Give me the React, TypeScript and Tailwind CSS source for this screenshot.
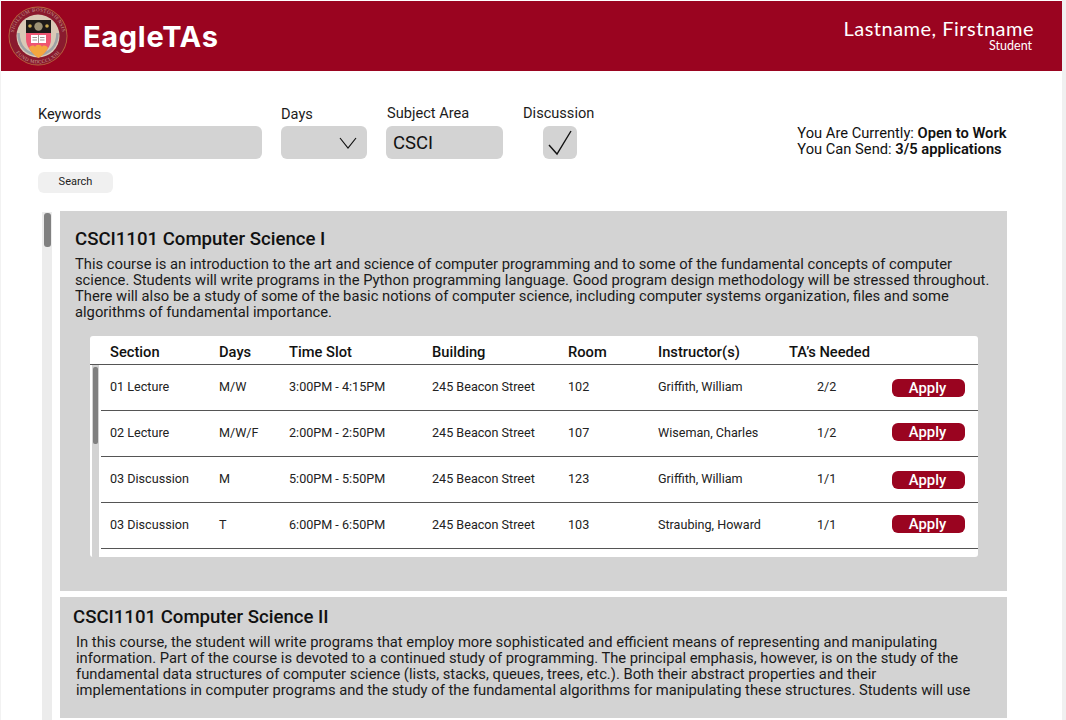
const rows = [
  { section: "01 Lecture", days: "M/W", time: "3:00PM - 4:15PM", room: "102", instructor: "Griffith, William", needed: "2/2", applyShift: "mt-[1px]" },
  { section: "02 Lecture", days: "M/W/F", time: "2:00PM - 2:50PM", room: "107", instructor: "Wiseman, Charles", needed: "1/2", applyShift: "mb-[4px]" },
  { section: "03 Discussion", days: "M", time: "5:00PM - 5:50PM", room: "123", instructor: "Griffith, William", needed: "1/1", applyShift: "mt-0" },
  { section: "03 Discussion", days: "T", time: "6:00PM - 6:50PM", room: "103", instructor: "Straubing, Howard", needed: "1/1", applyShift: "mb-[3px]" },
];

function Seal() {
  return (
    <svg width="60" height="60" viewBox="0 0 60 60" className="shrink-0">
      <defs>
        <path id="sealTop" d="M5.5 30a24.5 24.5 0 0 1 49 0" />
        <path id="sealBottom" d="M2.5 30a27.5 27.5 0 0 0 55 0" />
      </defs>
      <circle cx="30" cy="30" r="29.5" fill="#b9683f" />
      <circle cx="30" cy="30" r="28.6" fill="#8a1a2e" />
      <text fontSize="5" fill="#c99f92" fontFamily="Liberation Serif, serif" letterSpacing="0.4">
        <textPath href="#sealTop" startOffset="50%" textAnchor="middle">SIGILLUM BOSTONIENSIS</textPath>
      </text>
      <text fontSize="5" fill="#c99f92" fontFamily="Liberation Serif, serif" letterSpacing="0.4">
        <textPath href="#sealBottom" startOffset="50%" textAnchor="middle">FUND MDCCCLXIII</textPath>
      </text>
      <circle cx="30" cy="30" r="21.5" fill="#d9c9b6" />
      <path d="M10.5 27c0 13 8 21.500 19.500 21.500S49.500 40 49.500 27" fill="none" stroke="#9ea3a6" strokeWidth="2.5" />
      <path d="M18 14h25v19c0 8-6 14-12.500 19C24 47 18 41 18 33z" fill="#ee5672" />
      <path d="M18 14h25v13H18z" fill="#1d1a18" />
      <circle cx="30.500" cy="20.500" r="4.200" fill="#9c9276" />
      <circle cx="22" cy="20" r="1.800" fill="#c9a94f" />
      <circle cx="39" cy="20" r="1.800" fill="#c9a94f" />
      <path d="M23 29h15v8H23z" fill="#fff" />
      <path d="M30.500 29v8M24.500 31.500h4.500M24.500 34h4.500M32 31.500h4.500M32 34h4.500" stroke="#7a6a66" strokeWidth="0.7" />
      <path d="M21 42c2-3 5-3 6-1 1-3 6-3 7 0 1-2 4-2 6 1-2 4-5 7-9.500 10-4.500-3-7.500-6-9.500-10z" fill="#f3a63f" />
    </svg>
  );
}

function Field({ label, labelClass, children }: { label: string; labelClass: string; children: React.ReactNode }) {
  return (
    <div className="flex flex-col">
      <div className={`h-[17px] text-[14.6px] leading-[17px] text-[#1c1c1c] ${labelClass}`}>{label}</div>
      {children}
    </div>
  );
}

export default function App() {
  return (
    <div className="w-[1066px] h-[720px] overflow-hidden bg-white flex font-['Roboto',sans-serif] text-[#111]">
      <div className="w-px bg-[#f2f2f2] shrink-0" />
      <div className="flex-1 min-w-0 flex flex-col">
        {/* Header */}
        <header className="mt-px h-[70px] shrink-0 bg-[#9a0420] flex items-center justify-between pl-[7px] pr-[28px] text-white">
          <div className="flex items-center gap-[15px]">
            <Seal />
            <span className="font-['Inter',sans-serif] font-bold text-[29px] tracking-[0.7px] mt-px">EagleTAs</span>
          </div>
          <div className="flex flex-col items-end -mt-[4px]">
            <span className="font-['Lato',sans-serif] text-[20px] leading-[24px] tracking-[0.5px]">Lastname, Firstname</span>
            <span className="font-['Lato',sans-serif] text-[12.5px] leading-[12px] pr-[2px]">Student</span>
          </div>
        </header>

        {/* Filters */}
        <section className="flex pl-[37px] pt-[35px] h-[140px] shrink-0">
          <div className="flex flex-col">
            <div className="flex items-start">
              <Field label="Keywords" labelClass="mb-[3px]">
                <div className="w-[224px] h-[33px] rounded-[6px] bg-[#d3d3d3]" />
              </Field>
              <div className="ml-[19px]">
                <Field label="Days" labelClass="mb-[3px]">
                  <div className="w-[86px] h-[33px] rounded-[6px] bg-[#d3d3d3] flex items-center justify-end pr-[10px]">
                    <svg width="18" height="12" viewBox="0 0 18 12" fill="none" stroke="#111" strokeWidth="1.2">
                      <path d="M1 1l8 10 8-10" />
                    </svg>
                  </div>
                </Field>
              </div>
              <div className="ml-[19px] -mt-px">
                <Field label="Subject Area" labelClass="mb-[4px] pl-px">
                  <div className="w-[117px] h-[33px] rounded-[6px] bg-[#d3d3d3] flex items-center pl-[7px] pt-[2px] text-[18.5px]">CSCI</div>
                </Field>
              </div>
              <div className="ml-[20px] -mt-px flex flex-col items-start">
                <div className="h-[17px] text-[14.6px] leading-[17px] text-[#1c1c1c] mb-[4px]">Discussion</div>
                <div className="ml-[20px] w-[34px] h-[33px] rounded-[6px] bg-[#d3d3d3] flex items-center justify-center">
                  <svg width="26" height="26" viewBox="0 0 26 26" fill="none" stroke="#111" strokeWidth="1.4">
                    <path d="M2 15l8 9L24 1" />
                  </svg>
                </div>
              </div>
            </div>
            <button className="mt-[13px] w-[75px] h-[21px] rounded-[6px] bg-[#f0f0f0] text-[11px] text-[#222]">Search</button>
          </div>
          <div className="ml-[203px] pt-[19px] text-[14.7px] leading-[16px]">
            <div>You Are Currently: <span className="font-semibold">Open to Work</span></div>
            <div>You Can Send: <span className="font-semibold">3/5 applications</span></div>
          </div>
        </section>

        {/* Course list */}
        <div className="flex flex-1 min-h-0 pl-[41px] pr-[55px]">
          <div className="w-[10px] bg-[#ececec] shrink-0 pt-px pl-[2px] mt-px">
            <div className="w-[7px] h-[34px] rounded-[3px] bg-[#808080]" />
          </div>
          <div className="ml-[8px] flex-1 min-w-0 flex flex-col gap-[6px]">
            <article className="h-[380px] shrink-0 bg-[#d3d3d3] pl-[15px] pr-[15px] pt-[17px]">
              <h2 className="text-[18.6px] leading-[22px] font-medium">CSCI1101 Computer Science I</h2>
              <p className="mt-[6px] text-[14.75px] leading-[16px] text-[#1a1a1a]">
                This course is an introduction to the art and science of computer programming and to some of the fundamental concepts of computer
                science. Students will write programs in the Python programming language. Good program design methodology will be stressed throughout.
                There will also be a study of some of the basic notions of computer science, including computer systems organization, files and some
                algorithms of fundamental importance.
              </p>

              <div className="mt-[16px] ml-[15px] w-[888px] h-[221px] bg-white rounded-[3px] overflow-hidden">
                <div className="h-[24px] box-content border-b border-[#555] grid grid-cols-[109px_70px_143px_136px_90px_131px_1fr] pl-[20px] items-center text-[14.7px] font-medium pt-[4px]">
                  <span>Section</span>
                  <span>Days</span>
                  <span>Time Slot</span>
                  <span>Building</span>
                  <span>Room</span>
                  <span>Instructor(s)</span>
                  <span>TA’s Needed</span>
                </div>
                <div className="flex h-[192px]">
                  <div className="w-[7px] ml-[2px] shrink-0 bg-[#d3d3d3] pl-px pt-[2px]">
                    <div className="w-[5px] h-[77px] rounded-[2px] bg-[#808080]" />
                  </div>
                  <div className="flex-1 ml-[2px]">
                    {rows.map((r, i) => (
                      <div
                        key={i}
                        className="h-[46px] border-b border-[#555] grid grid-cols-[109px_70px_143px_136px_90px_131px_103px_1fr] pl-[9px] items-center text-[12.6px] text-[#222]"
                      >
                        <span>{r.section}</span>
                        <span>{r.days}</span>
                        <span>{r.time}</span>
                        <span>245 Beacon Street</span>
                        <span>{r.room}</span>
                        <span>{r.instructor}</span>
                        <span className="pl-[28px]">{r.needed}</span>
                        <button className={`w-[73px] h-[18px] rounded-[6px] bg-[#9a0420] text-white text-[14.8px] leading-[18px] font-medium pr-[2px] ${r.applyShift}`}>
                          Apply
                        </button>
                      </div>
                    ))}
                  </div>
                </div>
              </div>
            </article>

            <article className="flex-1 bg-[#d3d3d3] pl-[13px] pt-[9px] overflow-hidden">
              <h2 className="text-[18.6px] leading-[22px] font-medium">CSCI1101 Computer Science II</h2>
              <p className="mt-[6px] ml-[3px] w-[900px] text-[14.75px] leading-[16px] text-[#1a1a1a]">
                In this course, the student will write programs that employ more sophisticated and efficient means of representing and manipulating
                information. Part of the course is devoted to a continued study of programming. The principal emphasis, however, is on the study of the
                fundamental data structures of computer science (lists, stacks, queues, trees, etc.). Both their abstract properties and their
                implementations in computer programs and the study of the fundamental algorithms for manipulating these structures. Students will use
              </p>
            </article>
            <div className="h-[2px] -mt-[6px] shrink-0 bg-white" />
          </div>
        </div>
      </div>
      <div className="w-[4px] bg-[#f0f0f0] shrink-0" />
    </div>
  );
}
